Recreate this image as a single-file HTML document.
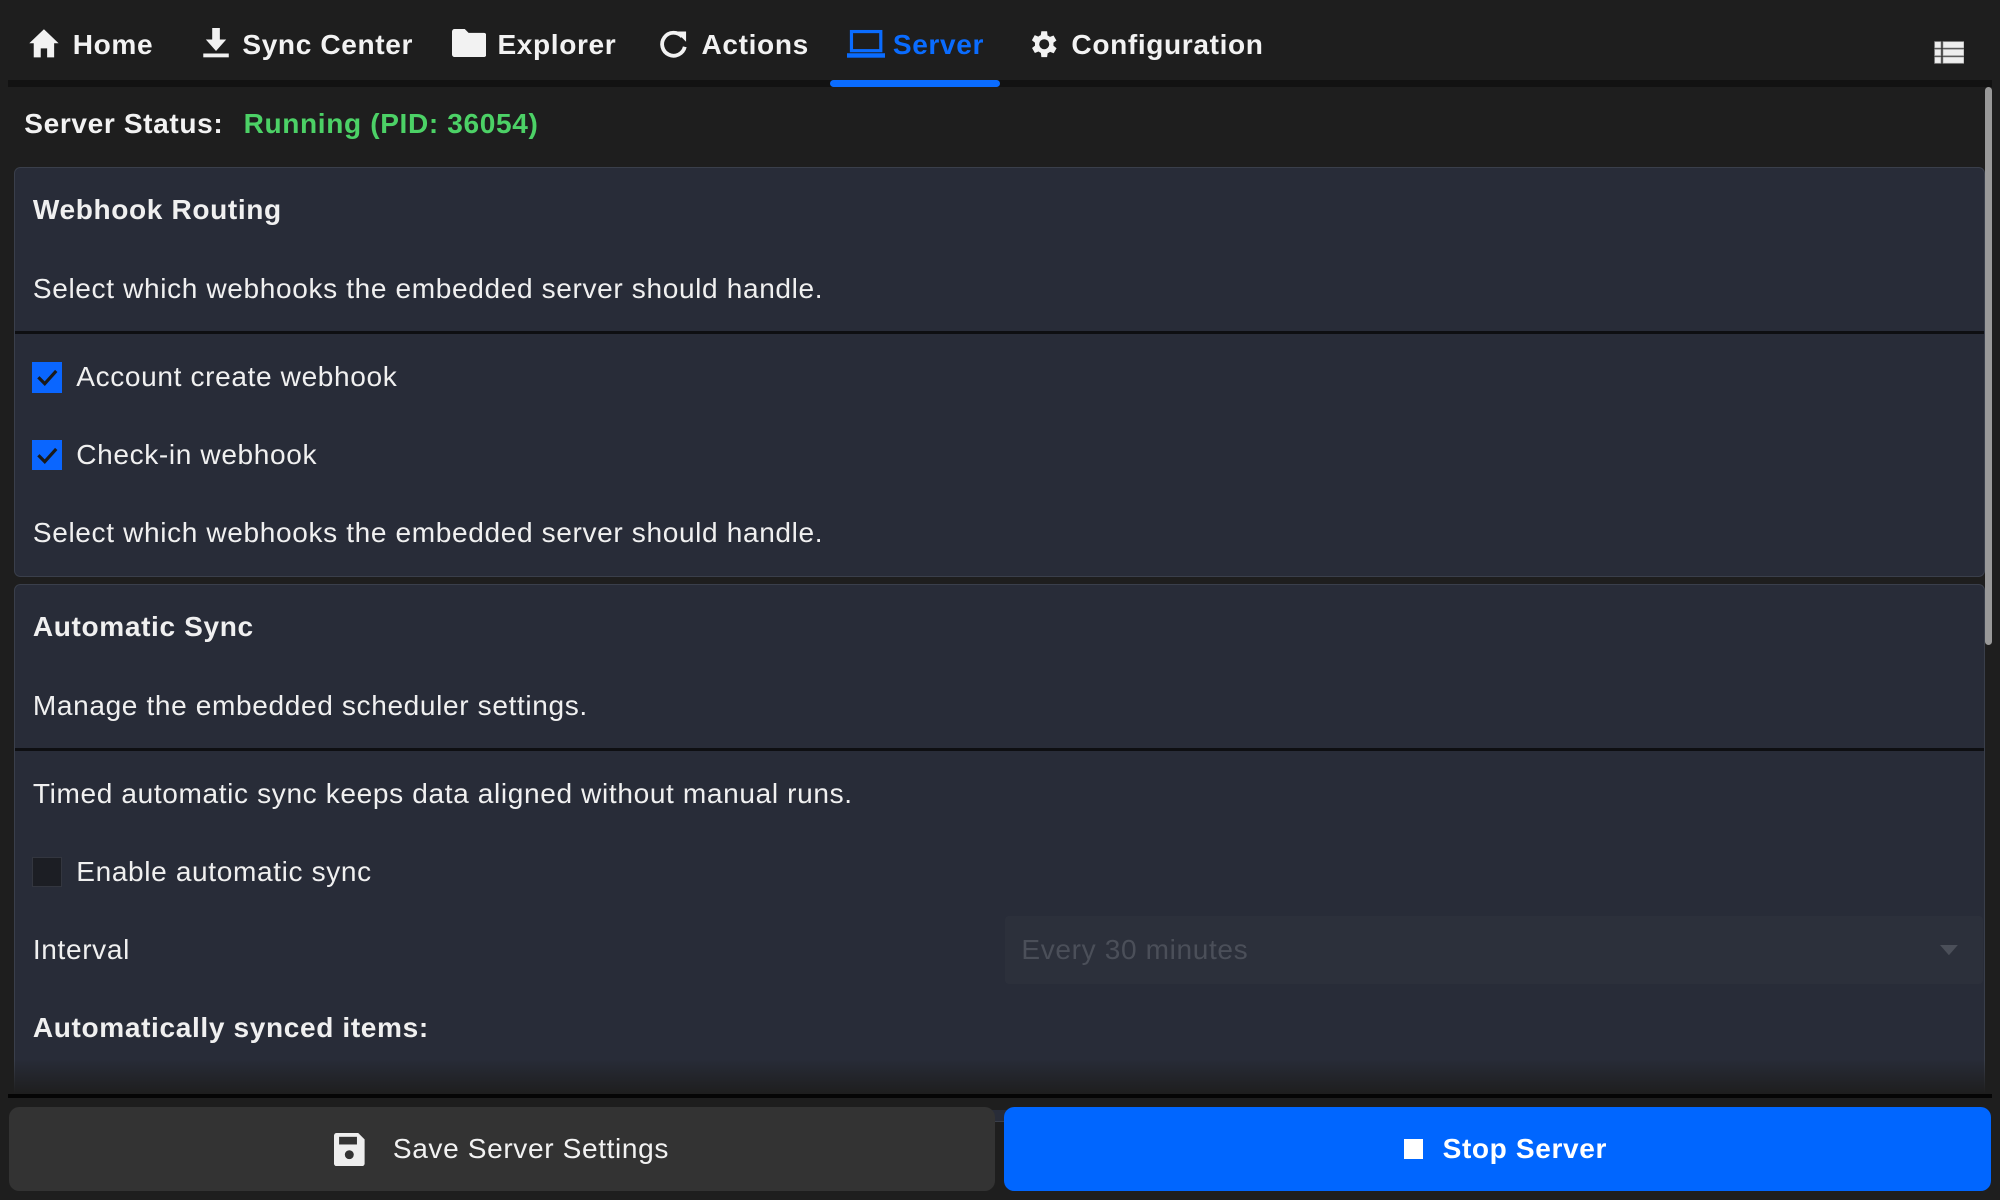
<!DOCTYPE html>
<html><head><meta charset="utf-8"><style>
html{zoom:1.27551}
body{margin:0;width:1568px;height:941px;background:#1e1e1e;font-family:"Liberation Sans",sans-serif;color:#eee;position:relative;overflow:hidden;letter-spacing:.5px}
.a{position:absolute;white-space:nowrap}
.tab{position:absolute;top:20px;font-size:22px;font-weight:bold;color:#f2f2f2;line-height:30px}
.card{position:absolute;left:11px;width:1544px;background:#282c38;border:1px solid #3a3f4b;border-radius:5px;overflow:hidden}
.t{position:absolute;left:14px;font-size:22px;line-height:30px;color:#f0f0f0;white-space:nowrap}
.b{font-weight:bold}
.cb{position:absolute;left:13px;width:24px;height:24px;background:#0a66ff}
.sep{position:absolute;left:0;right:0;height:2px;background:#0e0f12}
</style></head><body>
<svg class="a" style="left:22px;top:22px" width="25" height="24" viewBox="0 0 25 24"><path d="M12.5 1 L24 12 H20.5 V23 H15 V16 H10 V23 H4.5 V12 H1 Z" fill="#f2f2f2"/></svg>
<div class="tab" style="left:57px">Home</div>
<svg class="a" style="left:158px;top:22px" width="22" height="24" viewBox="0 0 22 24"><path d="M8 0h6v9h5l-8 9-8-9h5z" fill="#f2f2f2"/><rect x="1" y="20" width="20" height="3" fill="#f2f2f2"/></svg>
<div class="tab" style="left:190px">Sync Center</div>
<svg class="a" style="left:354px;top:23px" width="27" height="22" viewBox="0 0 27 22"><path d="M2 0h8l3 3h12a2 2 0 0 1 2 2v15a2 2 0 0 1-2 2H2a2 2 0 0 1-2-2V2a2 2 0 0 1 2-2z" fill="#f2f2f2"/></svg>
<div class="tab" style="left:390px">Explorer</div>
<svg class="a" style="left:516px;top:23px" width="24" height="24" viewBox="0 0 24 24"><path d="M19 6A9 9 0 1 0 21 14" fill="none" stroke="#f2f2f2" stroke-width="3"/><path d="M14 2h8v8z" fill="#f2f2f2"/></svg>
<div class="tab" style="left:550px">Actions</div>
<svg class="a" style="left:664px;top:23px" width="30" height="24" viewBox="0 0 30 24"><rect x="3.5" y="2" width="23" height="15" fill="none" stroke="#0a6cff" stroke-width="2.5"/><rect x="0" y="19" width="30" height="3.5" fill="#0a6cff"/></svg>
<div class="tab" style="left:700px;color:#0a6cff">Server</div>
<svg class="a" style="left:805px;top:21px" width="27" height="27" viewBox="0 0 24 24"><path fill="#f2f2f2" d="M19.4 13a7.5 7.5 0 0 0 0-2l2.1-1.6-2-3.5-2.5 1a7.5 7.5 0 0 0-1.7-1L15 3h-4l-.4 2.7a7.5 7.5 0 0 0-1.7 1l-2.5-1-2 3.5L6.6 11a7.5 7.5 0 0 0 0 2l-2.1 1.6 2 3.5 2.5-1a7.5 7.5 0 0 0 1.700 1L11 21h4l.4-2.7a7.5 7.5 0 0 0 1.7-1l2.5 1 2-3.5zM13 15.5a3.5 3.5 0 1 1 0-7 3.5 3.5 0 0 1 0 7z" transform="translate(-1 0)"/></svg>
<div class="tab" style="left:840px">Configuration</div>
<svg class="a" style="left:1516px;top:32px" width="24" height="18" viewBox="0 0 24 18"><g fill="#eee" stroke="#999" stroke-width=".6"><rect x=".5" y=".5" width="5" height="5"/><rect x="7" y=".5" width="16.5" height="5"/><rect x=".5" y="6.5" width="5" height="5"/><rect x="7" y="6.5" width="16.5" height="5"/><rect x=".5" y="12.5" width="5" height="5"/><rect x="7" y="12.5" width="16.5" height="5"/></g></svg>
<div class="a" style="left:6px;top:63px;width:1556px;height:5px;background:#121212"></div>
<div class="a" style="left:651px;top:63px;width:133px;height:5px;background:#0a6cff;border-radius:3px"></div>
<div class="a" style="left:1556px;top:68px;width:6px;height:438px;background:#999;border-radius:3px"></div>
<div class="a b" style="left:19px;top:82px;font-size:22px;line-height:30px;color:#f2f2f2">Server Status:</div>
<div class="a b" style="left:191px;top:82px;font-size:22px;line-height:30px;color:#4cd166">Running (PID: 36054)</div>
<div class="card" style="top:131px;height:320px">
<div class="t b" style="top:18px">Webhook Routing</div>
<div class="t" style="top:80px">Select which webhooks the embedded server should handle.</div>
<div class="sep" style="top:128px"></div>
<div class="cb" style="top:152px"><svg width="24" height="24"><path d="M5 12l5 5 9-10" fill="none" stroke="#1a1a1a" stroke-width="2.5"/></svg></div>
<div class="t" style="left:48px;top:149px">Account create webhook</div>
<div class="cb" style="top:213px"><svg width="24" height="24"><path d="M5 12l5 5 9-10" fill="none" stroke="#1a1a1a" stroke-width="2.5"/></svg></div>
<div class="t" style="left:48px;top:210px">Check-in webhook</div>
<div class="t" style="top:271px">Select which webhooks the embedded server should handle.</div>
</div>
<div class="card" style="top:458px;height:420px">
<div class="t b" style="top:18px">Automatic Sync</div>
<div class="t" style="top:80px">Manage the embedded scheduler settings.</div>
<div class="sep" style="top:128px"></div>
<div class="t" style="top:149px">Timed automatic sync keeps data aligned without manual runs.</div>
<div class="cb" style="top:213px;background:#1c1e24;border:1px solid #33363f;width:22px;height:22px"></div>
<div class="t" style="left:48px;top:210px">Enable automatic sync</div>
<div class="t" style="top:271px">Interval</div>
<div class="a" style="left:776px;top:259px;width:767px;height:54px;background:#2c303b;border-radius:3px"></div>
<div class="t" style="left:789px;top:271px;color:#4b4f59">Every 30 minutes</div>
<svg class="a" style="left:1509px;top:282px" width="14" height="8"><path d="M0 0h14L7 8z" fill="#4b4f59"/></svg>
<div class="t b" style="top:332px">Automatically synced items:</div>
</div>
<div class="a" style="left:0;top:830px;width:1568px;height:28px;background:linear-gradient(rgba(30,30,30,0),#1e1e1e)"></div>
<div class="a" style="left:0;top:858px;width:1568px;height:12px;background:#1e1e1e"></div>
<div class="a" style="left:6px;top:858px;width:1556px;height:3px;background:#050505"></div>
<div class="a" style="left:7px;top:868px;width:773px;height:66px;background:#333;border-radius:8px"></div>
<svg class="a" style="left:262px;top:888px" width="24" height="26" viewBox="0 0 24 26"><path d="M2 0h17l5 5v19a2 2 0 0 1-2 2H2a2 2 0 0 1-2-2V2a2 2 0 0 1 2-2z" fill="#eee"/><rect x="4" y="3" width="14" height="6" fill="#333"/><circle cx="12" cy="17" r="3.5" fill="#333"/></svg>
<div class="a" style="left:308px;top:886px;font-size:22px;line-height:30px;color:#f2f2f2">Save Server Settings</div>
<div class="a" style="left:787px;top:868px;width:774px;height:66px;background:#0066ff;border-radius:8px"></div>
<div class="a" style="left:1101px;top:893px;width:15px;height:16px;background:#fff"></div>
<div class="a b" style="left:1131px;top:886px;font-size:22px;line-height:30px;color:#fff">Stop Server</div>
</body></html>
